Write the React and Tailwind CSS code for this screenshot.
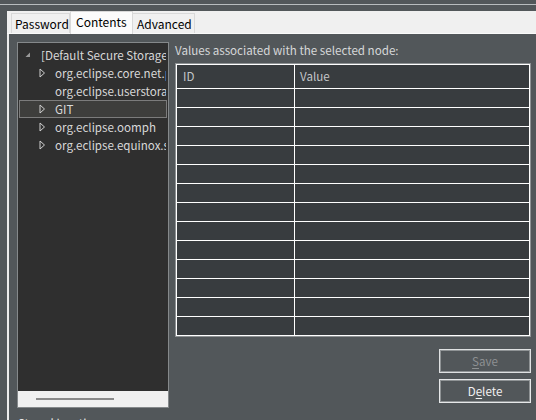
import React from "react";

const font = { fontFamily: '"Noto Sans CJK KR", "Noto Sans", sans-serif' };

function Collapsed() {
  return (
    <svg width="7" height="10" viewBox="0 0 7 10" className="shrink-0">
      <path d="M1 1 L5.5 5 L1 9 Z" fill="none" stroke="#cfcfcf" strokeWidth="1" />
    </svg>
  );
}

function Expanded() {
  return (
    <svg width="6" height="6" viewBox="0 0 6 6" className="shrink-0">
      <path d="M5 0.5 L5 5 L0.5 5 Z" fill="#9a9a9a" />
    </svg>
  );
}

const nodes = [
  { label: "[Default Secure Storage", level: 0, icon: "open" },
  { label: "org.eclipse.core.net.proxy", level: 1, icon: "closed" },
  { label: "org.eclipse.userstorage", level: 1, icon: null },
  { label: "GIT", level: 1, icon: "closed", selected: true },
  { label: "org.eclipse.oomph", level: 1, icon: "closed" },
  { label: "org.eclipse.equinox.secure", level: 1, icon: "closed" },
];

function TreeRow({ node }) {
  return (
    <div
      className={`h-[18px] flex items-center whitespace-nowrap overflow-hidden mx-px border ${
        node.selected ? "border-[#7c7c7c] bg-[#3e3e3c]" : "border-transparent"
      }`}
    >
      {node.level === 0 ? (
        <>
          <div className="w-[6px] ml-[5px] shrink-0 flex items-center"><Expanded /></div>
          <span className="ml-[10px] shrink-0 text-[#d8d8d8]">{node.label}</span>
        </>
      ) : (
        <>
          <div className="w-[7px] ml-[19px] shrink-0 flex items-center">{node.icon && <Collapsed />}</div>
          <span className="ml-[9px] shrink-0 text-[#d8d8d8]">{node.label}</span>
        </>
      )}
    </div>
  );
}

export default function App() {
  const rows = Array.from({ length: 13 });
  return (
    <div className="w-[536px] h-[420px] bg-[#52575a] overflow-hidden text-[11.6px] leading-[16px]" style={font}>
      <div className="h-[4px]" />
      <div className="h-px bg-[#b8bcbe]" />
      <div className="h-[6px]" />

      {/* tab strip */}
      <div className="ml-[7px] h-[22px] bg-[#f0f0f0] flex items-end pl-[4px] text-[12px]">
        <div className="w-[59px] h-[20px] border border-b-0 border-[#d9d9d9] bg-[#f0f0f0] pl-[3px] leading-[19px] text-black">Password</div>
        <div className="w-[63px] h-[23px] border border-b-0 border-[#d9d9d9] bg-[#fbfbfb] pl-[5px] leading-[20px] text-black relative top-px z-10">Contents</div>
        <div className="w-[62px] h-[20px] border border-b-0 border-l-0 border-[#d9d9d9] bg-[#f0f0f0] pl-[4px] leading-[19px] text-black">Advanced</div>
      </div>
      <div className="ml-[7px] h-px bg-[#fafafa]" />

      <div className="flex h-[400px]">
        <div className="w-[7px]" />
        <div className="w-[2px] bg-[#ececec]" />
        <div className="flex-1 pt-[8px] pl-[8px]">
          <div className="flex">
            {/* tree */}
            <div className="w-[152px] h-[366px] border border-[#85898b] bg-[#2f2f2f] flex flex-col">
              <div className="flex-1 pt-[3px] overflow-hidden">
                {nodes.map((n) => (
                  <TreeRow key={n.label} node={n} />
                ))}
              </div>
              <div className="h-[17px] bg-[#f0f0f0] flex items-center pl-[18px] border-t border-[#2f2f2f]">
                <div className="w-[78px] h-[2px] bg-[#8a8a8a]" />
              </div>
            </div>

            {/* values */}
            <div className="ml-[6px] flex flex-col">
              <div className="h-[16px] text-[#d6d8d9]">Values associated with the selected node:</div>
              <div className="mt-[5px] w-[356px] border border-[#8e9294]">
                <div className="border border-white bg-[#383c3f]">
                  <div className="flex h-[24px] border-b border-white text-[#c4c7c9]">
                    <div className="w-[118px] border-r border-white pl-[6px] leading-[23px]">ID</div>
                    <div className="flex-1 pl-[5px] leading-[23px]">Value</div>
                  </div>
                  {rows.map((_, i) => (
                    <div
                      key={i}
                      className={`flex ${i < 12 ? "h-[19px] border-b border-white" : "h-[18px]"}`}
                    >
                      <div className="w-[118px] border-r border-white" />
                      <div className="flex-1" />
                    </div>
                  ))}
                </div>
              </div>
              <div className="mt-[12px] flex flex-col items-end gap-[6px]">
                <button className="w-[92px] h-[24px] border border-[#dfe1e2] shadow-[inset_0_0_0_1px_#8f9395] text-[#8d9092] leading-[20px]">
                  <span className="underline underline-offset-2">S</span>ave
                </button>
                <button className="w-[92px] h-[24px] border border-[#e6e8e9] shadow-[inset_0_0_0_1px_#8f9395] text-[#f2f2f2] leading-[20px]">
                  D<span className="underline underline-offset-2">e</span>lete
                </button>
              </div>
            </div>
          </div>
          <div className="mt-[7px] ml-px text-[#e8e8e8]">Stored location:</div>
        </div>
      </div>
    </div>
  );
}
